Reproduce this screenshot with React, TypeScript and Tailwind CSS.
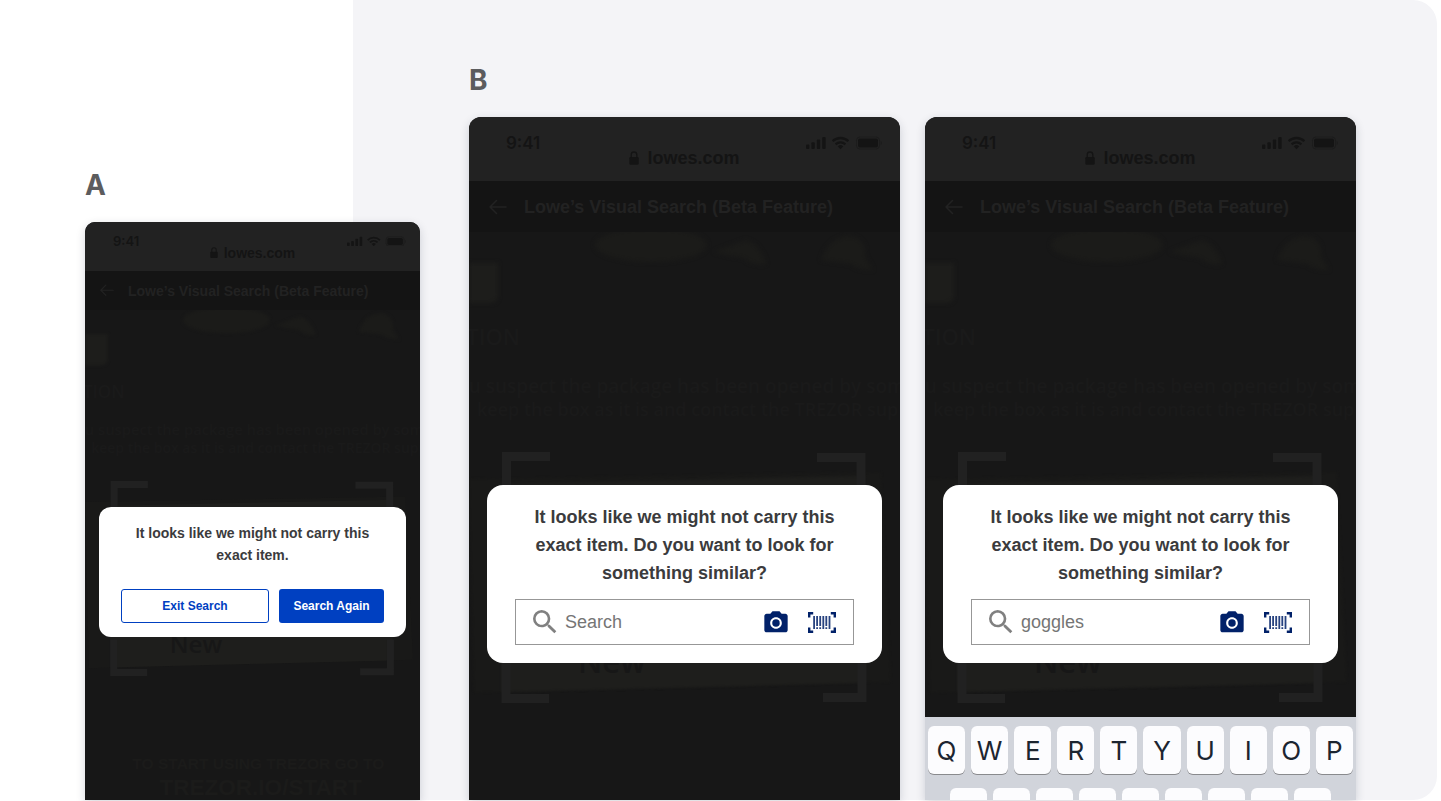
import type { ReactNode } from "react";
import clsx from "clsx";
import { MdPhotoCamera, MdSearch } from "react-icons/md";

const topRow = ["Q", "W", "E", "R", "T", "Y", "U", "I", "O", "P"];
const homeRow = ["A", "S", "D", "F", "G", "H", "J", "K", "L"];

type Size = "sm" | "lg";

function StatusIcons({ className }: { className?: string }) {
  return (
    <svg viewBox="0 0 76 14" fill="currentColor" className={className} aria-hidden="true">
      <rect x="0" y="8.5" width="3.4" height="4.5" rx="1" />
      <rect x="5.4" y="6.3" width="3.4" height="6.7" rx="1" />
      <rect x="10.8" y="3.6" width="3.4" height="9.4" rx="1" />
      <rect x="16.2" y="1" width="3.4" height="12" rx="1" />
      <g fill="none" stroke="currentColor" strokeWidth="2.3">
        <path d="M26.6 5.2a11.4 11.4 0 0 1 15.8 0" />
        <path d="M29.6 8.3a7.1 7.1 0 0 1 9.8 0" />
      </g>
      <path d="M34.5 13.2l-2.7-2.8a3.9 3.9 0 0 1 5.4 0z" />
      <rect x="50.5" y="1" width="23" height="12" rx="3.4" fill="none" stroke="currentColor" strokeOpacity="0.4" />
      <rect x="52" y="2.5" width="20" height="9" rx="2" />
      <path d="M74.6 5v4c.8-.3 1.3-1.1 1.3-2s-.5-1.7-1.3-2z" opacity="0.4" />
    </svg>
  );
}

function LockIcon({ className }: { className?: string }) {
  return (
    <svg viewBox="0 0 10 14" className={className} aria-hidden="true">
      <rect x="0.3" y="6" width="9.4" height="7.8" rx="1.3" fill="currentColor" />
      <path d="M2.2 6.5V3.8a2.8 2.8 0 0 1 5.6 0v2.7" fill="none" stroke="currentColor" strokeWidth="1.3" />
    </svg>
  );
}

function BackArrow({ className }: { className?: string }) {
  return (
    <svg
      viewBox="0 0 18 16"
      fill="none"
      stroke="currentColor"
      strokeWidth="1.5"
      strokeLinecap="round"
      strokeLinejoin="round"
      className={className}
      aria-hidden="true"
    >
      <path d="M17 8H1M7.5 1.5L1 8l6.5 6.5" />
    </svg>
  );
}

function BarcodeIcon({ className }: { className?: string }) {
  return (
    <svg viewBox="0 0 28 21" className={className} aria-hidden="true">
      <path
        d="M1.2 5.5V1.2h4M22.8 1.2h4v4.3M26.8 15.5v4.300h-4M5.200 19.800h-4v-4.300"
        fill="none"
        stroke="currentColor"
        strokeWidth="2.4"
      />
      <path
        d="M5.200 4h1.800v13H5.200zM8.200 4H10v10H8.200zM8.200 15.200H10V17H8.200zM11.300 4h1.800v10h-1.800zM11.300 15.200h1.800V17h-1.800zM14.400 4h1.800v13h-1.800zM17.400 4h1.800v10h-1.800zM17.400 15.200h1.800V17h-1.800zM20.600 4h1.800v13h-1.800z"
        fill="currentColor"
        opacity="0.85"
      />
    </svg>
  );
}

// Dimmed camera feed with the viewfinder corners on top of it
function CameraFeed({ showFooterText }: { showFooterText: boolean }) {
  return (
    <div className="absolute inset-0 overflow-hidden">
      <svg viewBox="0 0 431 640" className="block w-full" aria-hidden="true">
        <g fill="#1b1b19" className="blur-[2px]">
          <ellipse cx="182" cy="13" rx="56" ry="17" />
          <path d="M245 20q20-8 32-12q14 4 20 24q-14 2-22-6q-16-2-30-6z" />
          <path d="M352 28q8-24 30-24q16 4 14 20l8 14q-16 0-22-6z" />
          <path d="M0 31h29v34q-2 6-8 6H0z" fill="#1d1d1b" />
        </g>
        <path d="M0 247L412 240L422 450L5 461z" fill="#191918" className="blur-[1px]" />
        <path d="M32 252L396 244V451L32 460z" fill="#1e1e1c" className="blur-[1px]" />
        <g fill="#1a1a1a" fontFamily="'Open Sans', sans-serif">
          <text x="51" y="113" textAnchor="end" fontSize="22" fontWeight="600">TION</text>
          <g fontWeight="600">
            <text x="-22" y="161" fontSize="19">you suspect the package has been opened by someone</text>
            <text x="8" y="184" fontSize="18">keep the box as it is and contact the TREZOR support</text>
          </g>
          <text x="109" y="441" fontSize="31" fontWeight="600" fill="#171717">New</text>
        </g>
        {showFooterText && (
          <g fill="#1b1b1a" fontFamily="'Liberation Sans', Arial, sans-serif" fontWeight="700" textAnchor="middle">
            <text x="223" y="591" fontSize="20">TO START USING TREZOR GO TO</text>
            <text x="226" y="624" fontSize="29">TREZOR.IO/START</text>
          </g>
        )}
        <g fill="none" stroke="#212121" strokeWidth="9">
          <path d="M81 224.5H37.5V262" />
          <path d="M348 225.5H392V262" />
          <path d="M80 466.5H37V424" />
          <path d="M354 465.5H393V424" />
        </g>
      </svg>
    </div>
  );
}

function Phone({ size, children, footer }: { size: Size; children: ReactNode; footer?: ReactNode }) {
  const lg = size === "lg";

  return (
    <div
      className={clsx(
        "flex min-w-0 flex-1 flex-col overflow-hidden bg-[#171717] shadow-[0_3px_10px_rgba(30,40,60,0.18)]",
        lg ? "rounded-t-xl" : "rounded-t-[10px]"
      )}
    >
      <div className={clsx("bg-[#222222] text-[#141414]", lg ? "h-16 pt-4" : "h-[49px] pt-[11px]")}>
        <div className={clsx("flex items-center justify-between", lg ? "h-5 pl-[37px] pr-[18px]" : "h-4 pl-7 pr-3.5")}>
          <span
            className={clsx(
              "font-['Inter',sans-serif] font-semibold",
              lg ? "text-[17px] leading-5" : "text-[13px] leading-4"
            )}
          >
            9:41
          </span>
          <StatusIcons className={lg ? "w-[76px]" : "w-[59px]"} />
        </div>
        <div
          className={clsx(
            "flex items-center justify-center font-bold",
            lg ? "-mt-[5px] gap-2 text-lg leading-5" : "-mt-1 gap-1.5 text-sm leading-4"
          )}
        >
          <LockIcon className={lg ? "w-2.5" : "w-2"} />
          lowes.com
        </div>
      </div>
      <div
        className={clsx(
          "flex items-center bg-[#141414] text-[#222222]",
          lg ? "h-[51px] gap-[17px] pl-5" : "h-[39px] gap-3.5 pl-[15px]"
        )}
      >
        <button type="button" aria-label="Back">
          <BackArrow className={lg ? "w-[18px]" : "w-3.5"} />
        </button>
        <h2 className={clsx("whitespace-nowrap font-bold", lg ? "text-lg" : "text-sm")}>
          Lowe’s Visual Search (Beta Feature)
        </h2>
      </div>
      <div className="relative flex-1">
        <CameraFeed showFooterText={!lg} />
        <div className={clsx("relative", lg ? "px-[18px] pt-[253px]" : "px-3.5 pt-[197px]")}>{children}</div>
      </div>
      {footer}
    </div>
  );
}

function SearchDialog({ id, value }: { id: string; value?: string }) {
  return (
    <div role="dialog" aria-labelledby={`${id}-title`} className="rounded-2xl bg-white px-7 pb-[18px] pt-[18px]">
      <p id={`${id}-title`} className="text-center text-lg font-bold leading-7 text-[#3b3b3d]">
        It looks like we might not carry this exact item. Do you want to look for something similar?
      </p>
      <div className="mt-3 flex h-[46px] items-center border border-[#979797] pl-[13px] pr-[17px]">
        <label htmlFor={id} aria-label="Search" className="shrink-0 text-[#808080]">
          <MdSearch size={32} />
        </label>
        <input
          id={id}
          type="text"
          placeholder="Search"
          defaultValue={value}
          className="ml-1 min-w-0 flex-1 bg-transparent text-lg text-[#757575] outline-none placeholder:text-[#757575]"
        />
        <button type="button" aria-label="Search by photo" className="shrink-0 pt-0.5 text-[#012169]">
          <MdPhotoCamera size={28} />
        </button>
        <button type="button" aria-label="Scan barcode" className="ml-[18px] shrink-0 text-[#012169]">
          <BarcodeIcon className="w-7" />
        </button>
      </div>
    </div>
  );
}

function ExitDialog() {
  return (
    <div role="dialog" aria-labelledby="exit-title" className="rounded-xl bg-white px-[22px] pb-3.5 pt-[15px]">
      <p id="exit-title" className="text-center text-sm font-bold leading-[22px] text-[#3b3b3d]">
        It looks like we might not carry this
        <br />
        exact item.
      </p>
      <div className="mt-[23px] flex gap-2.5 text-xs font-bold">
        <button type="button" className="h-[34px] flex-1 rounded-[3px] border border-[#0040c1] text-[#0040c1]">
          Exit Search
        </button>
        <button type="button" className="h-[34px] w-[105px] rounded-[3px] bg-[#0040c1] text-white">
          Search Again
        </button>
      </div>
    </div>
  );
}

const keyClass =
  "h-12 min-w-0 flex-1 rounded-md bg-[#fcfcfe] text-[26px] text-[#1c2530] shadow-[0_1px_0_#898a8d]";

function Keyboard() {
  return (
    <div className="h-[83px] overflow-hidden bg-[#d1d4db] pt-[9px] font-['Inter',sans-serif]">
      <div className="flex gap-1.5 px-[3px]">
        {topRow.map((k) => (
          <button key={k} type="button" className={keyClass}>
            {k}
          </button>
        ))}
      </div>
      <div className="mt-3.5 flex gap-1.5 px-[25px]">
        {homeRow.map((k) => (
          <button key={k} type="button" aria-label={k} className={keyClass} />
        ))}
      </div>
    </div>
  );
}

function Label({ children }: { children: ReactNode }) {
  return (
    <h1 className="mb-[21px] font-['Inter',sans-serif] text-[28px] font-bold leading-8 text-[#5c5c5e]">{children}</h1>
  );
}

export default function App() {
  return (
    <main className="grid min-h-screen grid-cols-[353fr_67fr_1021fr] bg-white pb-px font-['Liberation_Sans',Arial,sans-serif]">
      <section className="z-10 col-span-2 col-start-1 row-start-1 flex flex-col pl-[85px] pt-[169px]">
        <Label>A</Label>
        <Phone size="sm">
          <ExitDialog />
        </Phone>
      </section>

      <section className="col-span-2 col-start-2 row-start-1 mr-1 flex flex-col rounded-r-3xl bg-[#f4f4f7] pl-[116px] pr-[81px] pt-16">
        <Label>B</Label>
        <div className="flex flex-1 gap-[25px]">
          <Phone size="lg">
            <SearchDialog id="search" />
          </Phone>
          <Phone size="lg" footer={<Keyboard />}>
            <SearchDialog id="search-goggles" value="goggles" />
          </Phone>
        </div>
      </section>
    </main>
  );
}
